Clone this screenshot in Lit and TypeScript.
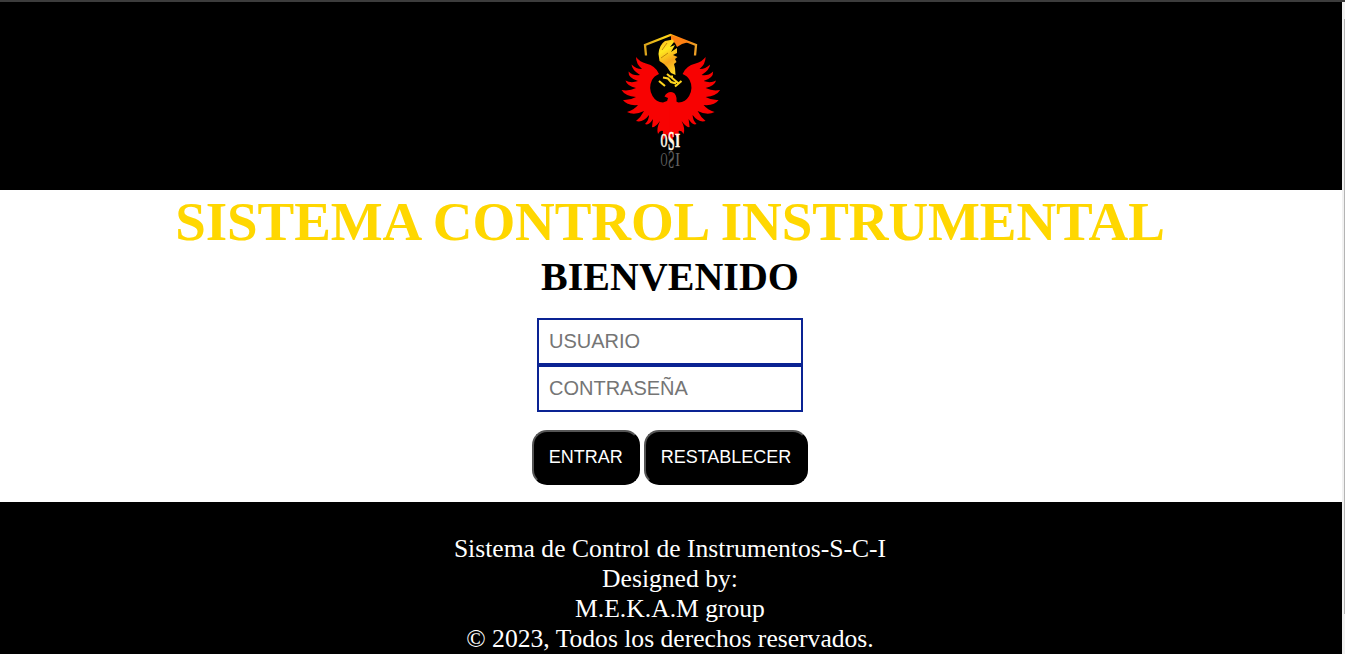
import { LitElement, html, css, svg } from "lit";
import { customElement } from "lit/decorators.js";

const wing = svg`<path d="M26 32 Q30 37 36 38.5 Q46 41 49 49 Q44 51 42 55 Q38 63 42.5 71 Q46 77 53 77.5 L57 76 L62 76 L62 112 L59 115 L57 109 Q55 111 54 115 Q52 114 53 106 Q50 105 48 109 Q46 104 50 96 Q45 103 42 102 L43 94 Q39 101 35 99 Q39 95 39 90 Q33 98 26 96 Q31 92 34 86 Q24 91 17 87 Q24 85 28 80 Q17 81 13 75 Q20 75.5 26 72 Q15 71 11.5 65 Q19 66.5 26 63 Q17 61 15.5 55.5 Q21 58.5 28 56 Q18 53 18.5 46.5 Q24 51.5 30 50 Q22 45 21.5 39.5 Q27 44.5 32 44 Q26 39 26 32 Z"/>`;

@customElement("phoenix-logo")
class PhoenixLogo extends LitElement {
  static styles = css`
    :host { display: block; width: 120px; height: 145px; }
    .art { display: block; }
    .letters { font-family: "Liberation Serif", serif; font-weight: bold; }
    .mirrored { font-weight: normal; }
  `;
  render() {
    return html`<svg class="art" width="120" height="145" viewBox="0 0 120 145" role="img" aria-label="OSI">
      <defs>
        <linearGradient id="gold" x1="35" y1="0" x2="87" y2="0" gradientUnits="userSpaceOnUse">
          <stop offset="0" stop-color="#d9a21c"/><stop offset=".4" stop-color="#ffd817"/>
          <stop offset=".7" stop-color="#ff7a10"/><stop offset="1" stop-color="#eba428"/>
        </linearGradient>
        <linearGradient id="helm" x1="48" y1="15" x2="68" y2="50" gradientUnits="userSpaceOnUse">
          <stop offset="0" stop-color="#ffb51e"/><stop offset=".3" stop-color="#ffe820"/>
          <stop offset=".6" stop-color="#f6a51b"/><stop offset="1" stop-color="#ffe52a"/>
        </linearGradient>
      </defs>
      <path d="M36 30.5 L35 20 L60.5 10 L86 20 L85 30.5" fill="none" stroke="url(#gold)" stroke-width="2.3"/>
      <path d="M61 10 L82 18 L77 17.5 Q72 18 67 22 L65 18 L61 15 Z" fill="#ff8012"/>
      <g fill="#f80202">
        ${wing}
        <g transform="translate(121.6 0) scale(-1 1)">${wing}</g>
        <path d="M56.5 78 L58 73 L54.5 71.5 Q56.5 67 61 67 Q65.5 67 66.5 73 L66.5 78 Z"/>
      </g>
      <path d="M63 14.5 L55 16 Q49 20 48.5 29 L49.5 36 L54 39 L57 42 L61 48 L65.5 50 L65 43 L64 39 L66.5 37 L65 34 L67.5 32 L63 30 L67 28 L67 23 L61 27 L65 20 L60 22 L64 17 Z" fill="url(#helm)"/>
      <path d="M52 25 L57 18 M51 33 L58 28" fill="none" stroke="#9a5800" stroke-width=".6"/>
      <path d="M49 56 L55 61 M71.5 56 L65 61.5 M57 49 L60 51.5 L63 51.5 M53 52.5 L58 53.5 L61 57 L66 58.5 M61 52 L68 58" fill="none" stroke="#ffd51d" stroke-width="2.1"/>
      <g class="letters" fill="#fff8e8" stroke="#fff8e8" stroke-width=".4">
        <text x="50.4" y="121.5" font-size="18" textLength="7" lengthAdjust="spacingAndGlyphs">O</text>
        <text x="58" y="124.5" font-size="27" textLength="6.5" lengthAdjust="spacingAndGlyphs">S</text>
        <text x="65" y="121.5" font-size="18" textLength="5.2" lengthAdjust="spacingAndGlyphs">I</text>
      </g>
      <g class="letters mirrored" fill="#626262" aria-hidden="true" transform="translate(0 249.5) scale(1 -1)">
        <text x="50.4" y="121.5" font-size="18" textLength="7" lengthAdjust="spacingAndGlyphs">O</text>
        <text x="58" y="123.5" font-size="25" textLength="6.5" lengthAdjust="spacingAndGlyphs">S</text>
        <text x="65" y="121.5" font-size="18" textLength="5.2" lengthAdjust="spacingAndGlyphs">I</text>
      </g>
    </svg>`;
  }
}

@customElement("app-root")
class AppRoot extends LitElement {
  static styles = css`
    * { box-sizing: border-box; }
    :host { display: flex; width: 100%; height: 654px; overflow: hidden; background: #fff; font-family: "Liberation Serif", serif; }
    .page { flex: 1; min-width: 0; text-align: center; }
    .header { height: 190px; padding-top: 23px; border-top: 2px solid #3c3c3c; background: #000; display: flex; justify-content: center; padding-right: 2px; }
    .main { height: 312px; display: flex; flex-direction: column; align-items: center; padding-right: 2px; }
    .title { margin: 0; font-size: 55px; line-height: 63px; letter-spacing: -0.1px; color: #ffd700; white-space: nowrap; }
    .welcome { margin: 0; padding-top: 1px; font-size: 40px; line-height: 46px; color: #000; }
    .form { padding-top: 18px; display: flex; flex-direction: column; align-items: center; }
    .field { display: block; width: 266px; height: 47px; margin: 0; padding: 0 10px; border: 2px solid #0a2393; border-radius: 0; background: #fff; font: 20px "Liberation Sans", sans-serif; outline: none; }
    .field::placeholder { color: #757575; }
    .actions { display: flex; gap: 4px; padding-top: 18px; }
    .button { height: 55px; padding: 0 15px; border: 2px outset #000; border-color: #555 #000 #000 #555; border-radius: 15px; background: #000; color: #fff; font: 18px "Liberation Sans", sans-serif; }
    .footer { height: 152px; padding: 32px 2px 0 0; background: #000; color: #fff; font-size: 25.6px; line-height: 30px; }
    .line { margin: 0; }
    .scroll { width: 3px; background: #f1f1f1; border-top: 2px solid #3c3c3c; display: flex; justify-content: flex-end; padding-top: 17px; }
    .thumb { width: 1px; height: 595px; background: #b4b4b4; }
  `;
  render() {
    return html`
      <div class="page">
        <header class="header"><phoenix-logo></phoenix-logo></header>
        <main class="main">
          <h1 class="title">SISTEMA CONTROL INSTRUMENTAL</h1>
          <h2 class="welcome">BIENVENIDO</h2>
          <form class="form" @submit=${(e: Event) => e.preventDefault()}>
            <input class="field" type="text" placeholder="USUARIO" />
            <input class="field" type="password" placeholder="CONTRASEÑA" />
            <div class="actions">
              <button class="button" type="submit">ENTRAR</button>
              <button class="button" type="reset">RESTABLECER</button>
            </div>
          </form>
        </main>
        <footer class="footer">
          <p class="line">Sistema de Control de Instrumentos-S-C-I</p>
          <p class="line">Designed by:</p>
          <p class="line">M.E.K.A.M group</p>
          <p class="line">© 2023, Todos los derechos reservados.</p>
        </footer>
      </div>
      <div class="scroll"><div class="thumb"></div></div>
    `;
  }
}
